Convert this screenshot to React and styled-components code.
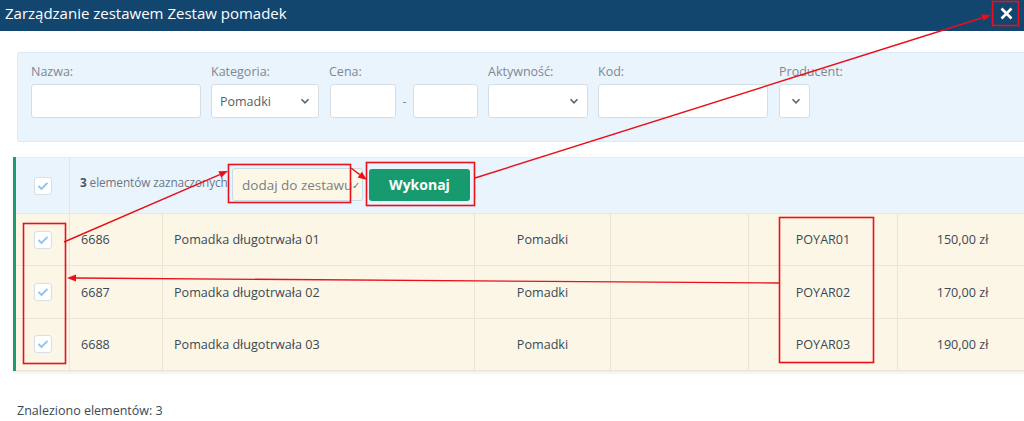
import React from 'react';
import styled, { createGlobalStyle } from 'styled-components';

const rows = [
  { id: '6686', name: 'Pomadka długotrwała 01', category: 'Pomadki', code: 'POYAR01', price: '150,00 zł' },
  { id: '6687', name: 'Pomadka długotrwała 02', category: 'Pomadki', code: 'POYAR02', price: '170,00 zł' },
  { id: '6688', name: 'Pomadka długotrwała 03', category: 'Pomadki', code: 'POYAR03', price: '190,00 zł' },
];

const Chevron = ({ size = 10 }) => (
  <svg width={size} height={size} viewBox="0 0 10 10">
    <path d="M1.5 3.2 L5 6.8 L8.5 3.2" fill="none" stroke="#5b6670" strokeWidth="1.6" />
  </svg>
);

const Check = () => (
  <CheckBox>
    <svg width="12" height="10" viewBox="0 0 12 10">
      <path d="M1.5 5 L4.5 8 L10.5 1.8" fill="none" stroke="#8ec2ea" strokeWidth="1.8" />
    </svg>
  </CheckBox>
);

const Arrow = ({ x1, y1, x2, y2 }) => {
  const a = Math.atan2(y2 - y1, x2 - x1);
  const l = 9;
  const w = 3.5;
  const bx = x2 - l * Math.cos(a);
  const by = y2 - l * Math.sin(a);
  const p1 = `${bx + w * Math.sin(a)},${by - w * Math.cos(a)}`;
  const p2 = `${bx - w * Math.sin(a)},${by + w * Math.cos(a)}`;
  return (
    <g>
      <line x1={x1} y1={y1} x2={bx} y2={by} stroke="#e8101a" strokeWidth="1.4" />
      <polygon points={`${x2},${y2} ${p1} ${p2}`} fill="#e8101a" />
    </g>
  );
};

const App = () => {
  return (
    <Page>
      <GlobalStyle />
      <Header>
        <Title>Zarządzanie zestawem Zestaw pomadek</Title>
        <CloseButton>
          <svg width="13" height="13" viewBox="0 0 13 13">
            <path d="M1.5 1.5 L11.5 11.5 M11.5 1.5 L1.5 11.5" stroke="#ffffff" strokeWidth="2.6" />
          </svg>
        </CloseButton>
      </Header>
      <Content>
        <FilterPanel>
          <Field>
            <Label>Nazwa:</Label>
            <Input $w={170} />
          </Field>
          <Field>
            <Label>Kategoria:</Label>
            <Select $w={108}>
              <span>Pomadki</span>
              <Chevron />
            </Select>
          </Field>
          <Field>
            <Label>Cena:</Label>
            <RangeRow>
              <Input $w={66} />
              <Dash>-</Dash>
              <Input $w={65} />
            </RangeRow>
          </Field>
          <Field>
            <Label>Aktywność:</Label>
            <Select $w={100}>
              <span />
              <Chevron />
            </Select>
          </Field>
          <Field>
            <Label>Kod:</Label>
            <Input $w={170} />
          </Field>
          <Field $ml={1}>
            <Label>Producent:</Label>
            <Select $w={31}>
              <span />
              <Chevron />
            </Select>
          </Field>
        </FilterPanel>

        <Table>
          <BulkRow>
            <CheckCell>
              <Check />
            </CheckCell>
            <BulkCell>
              <SelectedInfo>
                <b>3</b> elementów zaznaczonych
              </SelectedInfo>
              <ActionSelect>
                <span>dodaj do zestawu</span>
                <SmallCheck>✓</SmallCheck>
              </ActionSelect>
              <RunButton>Wykonaj</RunButton>
            </BulkCell>
          </BulkRow>
          {rows.map((r) => (
            <Row key={r.id}>
              <CheckCell>
                <Check />
              </CheckCell>
              <Cell>{r.id}</Cell>
              <Cell>{r.name}</Cell>
              <Cell $center>{r.category}</Cell>
              <Cell />
              <Cell $center>{r.code}</Cell>
              <Cell $center>{r.price}</Cell>
            </Row>
          ))}
        </Table>

        <Footer>Znaleziono elementów: 3</Footer>
      </Content>

      <Annotations width="1024" height="421" viewBox="0 0 1024 421">
        <rect x="992.5" y="1.5" width="26" height="24" fill="none" stroke="#e8101a" strokeWidth="1.6" />
        <rect x="228.5" y="164.5" width="122" height="38" fill="none" stroke="#e8101a" strokeWidth="1.6" />
        <rect x="366.5" y="162.5" width="108" height="43" fill="none" stroke="#e8101a" strokeWidth="1.6" />
        <rect x="23.5" y="223.5" width="42" height="140" fill="none" stroke="#e8101a" strokeWidth="1.6" />
        <rect x="779.5" y="217.5" width="94" height="145" fill="none" stroke="#e8101a" strokeWidth="1.6" />
        <Arrow x1={64} y1={242} x2={228} y2={171} />
        <Arrow x1={351} y1={168} x2={367} y2={180} />
        <Arrow x1={475} y1={178} x2={991} y2={15} />
        <Arrow x1={779} y1={283} x2={67} y2={278} />
      </Annotations>
    </Page>
  );
};

export default App;

const GlobalStyle = createGlobalStyle`
  html, body {
    margin: 0;
    padding: 0;
    background: #ffffff;
  }
  body {
    font-family: "Open Sans", "Noto Sans", sans-serif;
    color: #3b4955;
  }
`;

const Page = styled.div`
  position: relative;
  width: 1024px;
  height: 421px;
  overflow: hidden;
  background: #ffffff;
`;

const Header = styled.header`
  height: 31px;
  background: #13466f;
  display: flex;
  align-items: center;
  justify-content: space-between;
  padding: 0 11px 0 5px;
`;

const Title = styled.h1`
  margin: 0;
  font-size: 15px;
  font-weight: 400;
  color: #ffffff;
  line-height: 20px;
  padding-bottom: 6px;
`;

const CloseButton = styled.span`
  display: flex;
  margin-bottom: 5px;
`;

const Content = styled.main`
  padding: 21px 0 0 17px;
`;

const FilterPanel = styled.section`
  height: 90px;
  box-sizing: border-box;
  margin-right: -20px;
  background: #eaf4fd;
  border: 1px solid #dde9f3;
  border-radius: 2px;
  padding: 9px 0 0 13px;
  display: flex;
  gap: 10px;
`;

const Field = styled.div`
  display: flex;
  flex-direction: column;
  gap: 3px;
  margin-left: ${(p) => p.$ml || 0}px;
`;

const Label = styled.label`
  font-size: 12.5px;
  color: #7d8893;
  line-height: 19px;
  white-space: nowrap;
`;

const Input = styled.div`
  width: ${(p) => p.$w}px;
  height: 34px;
  box-sizing: border-box;
  background: #ffffff;
  border: 1px solid #d5dde5;
  border-radius: 3px;
`;

const Select = styled(Input)`
  display: flex;
  align-items: center;
  justify-content: space-between;
  padding: 0 8px 0 8px;
  font-size: 12.5px;
  color: #56616b;
`;

const RangeRow = styled.div`
  display: flex;
  align-items: center;
  padding-left: 1px;
`;

const Dash = styled.span`
  width: 17px;
  text-align: center;
  font-size: 12px;
  color: #7d8893;
`;

const Table = styled.section`
  margin: 15px -20px 0 -4px;
  border-left: 3px solid #1f9b6d;
  box-shadow: 0 2px 3px rgba(0, 0, 0, 0.08);
`;

const BulkRow = styled.div`
  height: 57px;
  box-sizing: border-box;
  display: grid;
  grid-template-columns: 54px 1fr;
  background: #eaf4fd;
  border-bottom: 1px solid #dfe9f1;
  border-top: 1px solid #e3edf5;
`;

const Row = styled.div`
  height: 52.4px;
  box-sizing: border-box;
  display: grid;
  grid-template-columns: 54px 93px 312px 136px 138px 149px 130px;
  background: #fcf6e7;
  border-bottom: 1px solid #ebe5d5;
`;

const CheckCell = styled.div`
  display: flex;
  align-items: center;
  justify-content: center;
  border-right: 1px solid #e6e4dc;
`;

const CheckBox = styled.span`
  width: 18px;
  height: 18px;
  box-sizing: border-box;
  background: #ffffff;
  border: 1px solid #d6e0e8;
  border-radius: 3px;
  display: flex;
  align-items: center;
  justify-content: center;
`;

const Cell = styled.div`
  display: flex;
  align-items: center;
  justify-content: ${(p) => (p.$center ? 'center' : 'flex-start')};
  padding: 0 ${(p) => (p.$center ? 0 : 11)}px;
  font-size: 12.6px;
  color: #3b4955;
  border-right: 1px solid #ebe4d3;
  white-space: nowrap;
`;

const BulkCell = styled.div`
  display: flex;
  align-items: center;
  padding-left: 10px;
`;

const SelectedInfo = styled.span`
  font-size: 11.8px;
  color: #6c7883;
  white-space: nowrap;
  width: 152px;
  overflow: visible;
  margin-top: -8px;
  letter-spacing: -0.1px;
  b {
    color: #4a5661;
  }
`;

const ActionSelect = styled.div`
  width: 131px;
  height: 33px;
  box-sizing: border-box;
  margin-top: -2px;
  background: #fdf7e5;
  border: 1px solid #c8dbe9;
  border-radius: 3px;
  display: flex;
  align-items: center;
  justify-content: space-between;
  padding: 0 4px 0 9px;
  font-size: 13.5px;
  color: #7a7f84;
  white-space: nowrap;
  position: relative;
  z-index: 1;
`;

const SmallCheck = styled.span`
  font-size: 10px;
  color: #6b7680;
`;

const RunButton = styled.button`
  margin: -2px 0 0 6px;
  width: 101px;
  height: 32px;
  border: none;
  border-radius: 3px;
  background: #179a6e;
  color: #ffffff;
  font-family: "Open Sans", "Noto Sans", sans-serif;
  font-weight: 700;
  font-size: 14px;
`;

const Footer = styled.p`
  margin: 31px 0 0;
  font-size: 12.5px;
  color: #3b4955;
`;

const Annotations = styled.svg`
  position: absolute;
  left: 0;
  top: 0;
  pointer-events: none;
  z-index: 5;
`;
